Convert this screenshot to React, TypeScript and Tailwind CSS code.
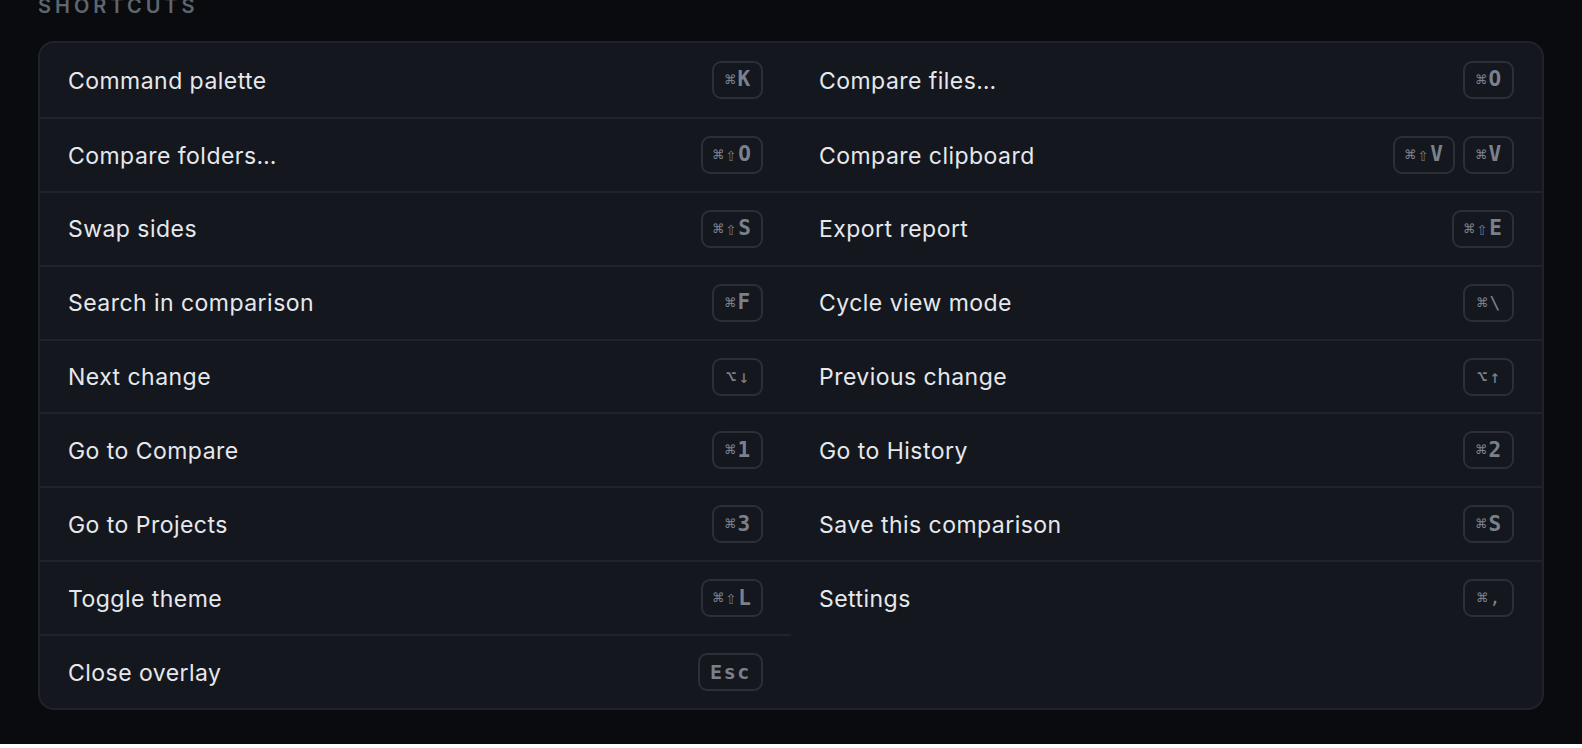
import React from 'react';

type Shortcut = { label: string; keys: string[][] };

// each key combo: modifiers first, last item is the main key
const SHORTCUTS: Shortcut[] = [
  { label: 'Command palette', keys: [['⌘', 'K']] },
  { label: 'Compare files…', keys: [['⌘', 'O']] },
  { label: 'Compare folders…', keys: [['⌘', '⇧', 'O']] },
  { label: 'Compare clipboard', keys: [['⌘', '⇧', 'V'], ['⌘', 'V']] },
  { label: 'Swap sides', keys: [['⌘', '⇧', 'S']] },
  { label: 'Export report', keys: [['⌘', '⇧', 'E']] },
  { label: 'Search in comparison', keys: [['⌘', 'F']] },
  { label: 'Cycle view mode', keys: [['⌘', '\\']] },
  { label: 'Next change', keys: [['⌥', '↓']] },
  { label: 'Previous change', keys: [['⌥', '↑']] },
  { label: 'Go to Compare', keys: [['⌘', '1']] },
  { label: 'Go to History', keys: [['⌘', '2']] },
  { label: 'Go to Projects', keys: [['⌘', '3']] },
  { label: 'Save this comparison', keys: [['⌘', 'S']] },
  { label: 'Toggle theme', keys: [['⌘', '⇧', 'L']] },
  { label: 'Settings', keys: [['⌘', ',']] },
  { label: 'Close overlay', keys: [['Esc']] },
];

function Kbd({ combo }: { combo: string[] }) {
  const mods = combo.slice(0, -1);
  const key = combo[combo.length - 1];
  const light = key === ',' || key === '\\' || key === '↓' || key === '↑';
  return (
    <kbd className="flex h-[38px] min-w-[51px] items-center justify-center gap-[2px] rounded-[9px] border-2 border-[#2a2f38] px-[10px] font-['DejaVu_Sans_Mono',monospace] text-[#7b818c]">
      {mods.map((m, i) => (
        <span key={i} className="text-[18px] leading-none">
          {m}
        </span>
      ))}
      <span
        className={
          light
            ? 'text-[18px] leading-none'
            : key === 'Esc'
              ? 'text-[20px] font-bold leading-none tracking-[0.08em]'
              : 'text-[21px] font-bold leading-none'
        }
      >
        {key}
      </span>
    </kbd>
  );
}

export default function App() {
  return (
    <div className="min-h-screen w-full bg-[#0a0b0e] font-['Inter',sans-serif]">
      <div className="px-[38px]">
        <h2 className="-mt-[4px] h-[45px] text-[20px] font-semibold uppercase leading-[20px] tracking-[0.2em] text-[#5f6670]">
          Shortcuts
        </h2>
        <div className="grid grid-cols-2 overflow-hidden rounded-[16px] border-2 border-[#1f232b] bg-[#14171e]">
          {SHORTCUTS.map((s, i) => (
            <div
              key={s.label}
              className={`flex h-[73.9px] items-center justify-between pl-[28px] pr-[28px] ${
                i >= 2 ? 'border-t-2 border-[#1f232b]' : ''
              }`}
            >
              <span className="pt-[2px] text-[23px] tracking-[0.02em] text-[#e6e8ec]">{s.label}</span>
              <div className="flex gap-[8px]">
                {s.keys.map((k, j) => (
                  <Kbd key={j} combo={k} />
                ))}
              </div>
            </div>
          ))}
        </div>
      </div>
    </div>
  );
}
